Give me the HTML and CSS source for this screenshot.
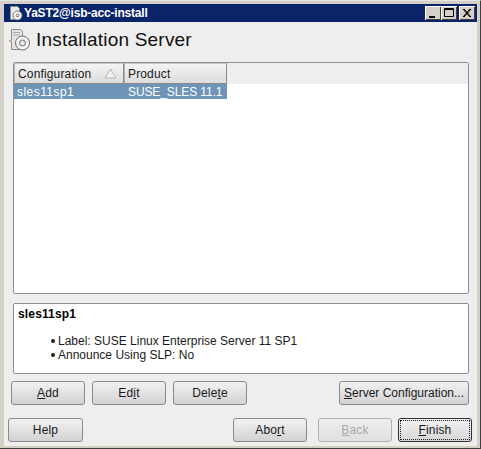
FILE: index.html
```html
<!DOCTYPE html>
<html lang="en">
<head>
<meta charset="utf-8">
<title>YaST2@isb-acc-install</title>
<link rel="stylesheet" href="styles.css">
</head>
<body>
<div class="window">
  <header class="titlebar">
    <svg class="title-icon" width="14" height="16" viewBox="0 0 14 16">
      <path d="M1.5 1.5h7l2 2v5h-2v6h-7z" fill="#e8e8e8" stroke="#8a8a8a"/>
      <circle cx="8.5" cy="10.5" r="4.5" fill="#f4f4f4" stroke="#777"/>
      <circle cx="8.5" cy="10.5" r="1.3" fill="#fff" stroke="#666"/>
    </svg>
    <span class="title-text">YaST2@isb-acc-install</span>
    <div class="win-buttons">
      <span class="win-btn"><svg width="16" height="14" viewBox="0 0 16 14"><rect x="4" y="10" width="6" height="2" fill="#000"/></svg></span>
      <span class="win-btn"><svg width="16" height="14" viewBox="0 0 16 14"><path d="M3.5 2.5h9v8h-9zM3.5 3.5h9" fill="none" stroke="#000"/></svg></span>
      <span class="win-btn win-close"><svg width="16" height="14" viewBox="0 0 16 14"><path d="M4 3l7 8M5 3l7 8M11 3l-7 8M12 3l-7 8" stroke="#000" fill="none"/></svg></span>
    </div>
  </header>
  <main class="content">
    <div class="heading">
      <svg class="heading-icon" width="21" height="22" viewBox="0 0 21 22">
        <path d="M2.5 0.5h9l2 2v5h-3v13h-8z" fill="#e4e4e4" stroke="#8c8c8c"/>
        <path d="M4 3.5h7M4 6h7" stroke="#aaa"/>
        <rect x="0" y="11" width="3" height="2" fill="#c9a98f"/>
        <circle cx="13.5" cy="14" r="7" fill="#f3f3f3" stroke="#6e6e6e"/>
        <circle cx="13.5" cy="14" r="3" fill="#e0e0e0" stroke="#777"/>
        <circle cx="13.5" cy="14" r="1" fill="#fff"/>
      </svg>
      <h1>Installation Server</h1>
    </div>
    <section class="table-box">
      <div class="table-head">
        <div class="th th-config">Configuration
          <svg class="sort" width="13" height="11" viewBox="0 0 13 11"><path d="M6.5 1L12 10H1z" fill="#f2f2f2" stroke="#b4b4b4"/></svg>
        </div>
        <div class="th th-product">Product</div>
      </div>
      <div class="row">
        <span class="cell-config">sles11sp1</span>
        <span class="cell-product">SUSE_SLES 11.1</span>
      </div>
    </section>
    <section class="details">
      <strong>sles11sp1</strong>
      <ul>
        <li>Label: SUSE Linux Enterprise Server 11 SP1</li>
        <li>Announce Using SLP: No</li>
      </ul>
    </section>
    <div class="actions">
      <button class="btn"><u>A</u>dd</button>
      <button class="btn">Ed<u>i</u>t</button>
      <button class="btn">Dele<u>t</u>e</button>
      <button class="btn btn-server"><u>S</u>erver Configuration...</button>
    </div>
    <div class="footer">
      <button class="btn">Help</button>
      <button class="btn btn-abort">Abo<u>r</u>t</button>
      <button class="btn btn-disabled"><u>B</u>ack</button>
      <button class="btn btn-default"><span class="focus"><u>F</u>inish</span></button>
    </div>
  </main>
</div>
</body>
</html>
```
FILE: styles.css
```css
* { box-sizing: border-box; }
html, body { margin: 0; padding: 0; }
body {
  width: 481px;
  height: 449px;
  overflow: hidden;
  font-family: "Liberation Sans", Arial, sans-serif;
  font-size: 12px;
  letter-spacing: 0.15px;
  color: #1a1a1a;
  background: #d4d0c8;
}
.window {
  width: 481px;
  height: 449px;
  display: flex;
  flex-direction: column;
  padding: 4px 3px 2px 4px;
  border-top: 1px solid #e8e6e0;
  border-right: 1px solid #404040;
  border-bottom: 1px solid #404040;
}
.titlebar {
  height: 18px;
  flex: none;
  background: #0a246a;
  display: flex;
  align-items: center;
  padding: 0 2px 0 5px;
  color: #fff;
  margin-top: -1px;
}
.title-icon { flex: none; }
.title-text {
  margin-left: 1px;
  font-weight: bold;
  font-size: 12px;
  letter-spacing: -0.2px;
}
.win-buttons {
  margin-left: auto;
  display: flex;
}
.win-btn {
  width: 16px;
  height: 14px;
  background: #d4d0c8;
  box-shadow: inset 1px 1px 0 #fff, inset -1px -1px 0 #404040;
  display: block;
}
.win-btn svg { display: block; }
.win-close { margin-left: 2px; }
.content {
  flex: 1;
  background: #eeeeee;
  display: flex;
  flex-direction: column;
  padding: 0 4px;
  min-height: 0;
}
.heading {
  height: 40px;
  display: flex;
  align-items: center;
  flex: none;
  margin-left: 1px;
  padding-bottom: 5px;
}
.heading-icon { flex: none; }
h1 {
  margin: 0 0 0 6px;
  font-size: 19px;
  font-weight: normal;
  letter-spacing: 0.2px;
  color: #111;
}
.table-box {
  flex: none;
  height: 232px;
  margin: 0 0 0 5px;
  width: 456px;
  background: #fff;
  border: 1px solid #8e8e8e;
  border-radius: 2px;
}
.table-head {
  display: flex;
  height: 21px;
  background: #eeeeee;
  width: 100%;
}
.th {
  height: 21px;
  display: flex;
  align-items: center;
  padding-left: 3px;
  border: 1px solid #8a8a8a;
  border-top-color: #c8c8c8;
  border-left-color: #b0b0b0;
  background: linear-gradient(#f4f4f4, #dcdcdc);
  position: relative;
}
.th-config { width: 110px; }
.th-product { width: 103px; padding-left: 3px; }
.sort { position: absolute; right: 6px; top: 4px; }
.row {
  display: flex;
  width: 213px;
  height: 15px;
  background: #6e95b8;
  color: #fff;
  align-items: center;
  padding-left: 3px;
}
.cell-config { width: 111px; letter-spacing: 0.45px; }
.cell-product { letter-spacing: -0.1px; }
.details {
  flex: none;
  height: 71px;
  width: 456px;
  margin: 9px 0 0 5px;
  background: #fff;
  border: 1px solid #8e8e8e;
  border-radius: 2px;
  padding: 3px 4px;
}
.details strong { display: block; color: #000; line-height: 14px; }
.details ul {
  margin: 13px 0 0 0;
  padding: 0 0 0 40px;
  line-height: 14px;
  list-style: none;
  letter-spacing: 0;
}
.details li { position: relative; }
.details li::before {
  content: "";
  position: absolute;
  left: -7px;
  top: 5px;
  width: 4px;
  height: 4px;
  border-radius: 50%;
  background: #222;
}
.actions {
  display: flex;
  margin: 7px 0 0 3px;
  width: 458px;
  gap: 7px;
  flex: none;
}
.actions .btn { padding-bottom: 1px; }
.footer {
  display: flex;
  margin: 13px 0 0 0;
  width: 464px;
  flex: none;
}
.btn {
  font: inherit;
  letter-spacing: inherit;
  color: #1a1a1a;
  width: 74px;
  height: 24px;
  padding: 0;
  background: linear-gradient(#f2f2f2, #d2d2d2);
  border: 1px solid #8a8a8a;
  border-radius: 3px;
  flex: none;
  white-space: nowrap;
}
.actions .btn-server { width: 130px; margin-left: auto; letter-spacing: 0; }
.footer .btn:first-child { width: 75px; }
.btn-abort { margin-left: auto; margin-right: 11px; }
.btn-disabled {
  color: #a8a8a8;
  margin-right: 6px;
  background: linear-gradient(#eeeeee, #e0e0e0);
  border-color: #b0b0b0;
}
.btn-default {
  border-color: #333;
  padding: 1px;
  background: linear-gradient(#f2f2f2, #d6d6d6);
}
.focus {
  display: flex;
  align-items: center;
  justify-content: center;
  width: 100%;
  height: 100%;
  border: 1px dotted #222;
}
```
